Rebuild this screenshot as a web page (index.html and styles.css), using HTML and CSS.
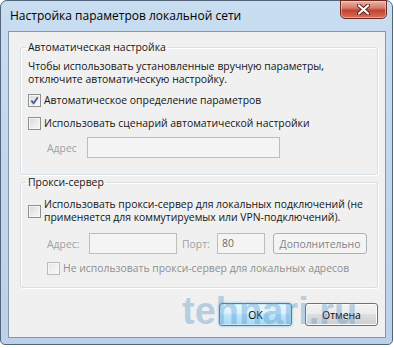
FILE: index.html
```html
<!DOCTYPE html>
<html lang="ru">
<head>
    <meta charset="UTF-8">
    <meta name="viewport" content="width=device-width, initial-scale=1.0">
    <title>Настройка параметров локальной сети</title>
    <link rel="stylesheet" href="styles.css">
</head>
<body>
    <div class="window">
        <div class="titlebar">
            <span class="title">Настройка параметров локальной сети</span>
            <button class="close-btn" aria-label="Закрыть">
                <svg width="13" height="11" viewBox="0 0 13 11">
                    <path d="M2 1.5 L11 9.5 M11 1.5 L2 9.5" stroke="#5b1c14" stroke-width="4" stroke-linecap="round"/>
                    <path d="M2 1.5 L11 9.5 M11 1.5 L2 9.5" stroke="#fff" stroke-width="2.2" stroke-linecap="round"/>
                </svg>
            </button>
        </div>

        <div class="client">
            <fieldset class="group">
                <legend>Автоматическая настройка</legend>
                <p class="hint">Чтобы использовать установленные вручную параметры,<br>отключите автоматическую настройку.</p>
                <label class="check-row first">
                    <span class="check">
                        <svg width="9" height="9" viewBox="0 0 9 9">
                            <path d="M1.3 4.6 L3.6 7.2 L7.8 1.2" fill="none" stroke="#4a5c94" stroke-width="1.8"/>
                        </svg>
                    </span>
                    Автоматическое определение параметров
                </label>
                <label class="check-row second">
                    <span class="check"></span>
                    Использовать сценарий автоматической настройки
                </label>
                <div class="field-row">
                    <span class="field-label">Адрес</span>
                    <span class="textbox addr-auto"></span>
                </div>
            </fieldset>

            <fieldset class="group proxy">
                <legend>Прокси-сервер</legend>
                <label class="check-row multi">
                    <span class="check"></span>
                    <span class="multi-text">Использовать прокси-сервер для локальных подключений (не<br>применяется для коммутируемых или VPN-подключений).</span>
                </label>
                <div class="field-row proxy-row">
                    <span class="field-label proxy-label">Адрес:</span>
                    <span class="textbox addr-proxy"></span>
                    <span class="port-label">Порт:</span>
                    <span class="textbox port">80</span>
                    <button class="btn btn-advanced" disabled>Дополнительно</button>
                </div>
                <label class="check-row indented disabled">
                    <span class="check"></span>
                    Не использовать прокси-сервер для локальных адресов
                </label>
            </fieldset>

            <div class="actions">
                <button class="btn btn-default">OK</button>
                <button class="btn">Отмена</button>
            </div>
        </div>

        <div class="watermark">tehnari.ru</div>
    </div>
</body>
</html>
```

FILE: styles.css
```css
* {
    box-sizing: border-box;
}

body {
    margin: 0;
    background-color: #fff;
    font-family: "Open Sans", "Noto Sans", sans-serif;
    font-size: 10.4px;
    color: #151515;
}

.window {
    position: relative;
    width: 393px;
    height: 345px;
    display: flex;
    flex-direction: column;
    padding: 0 6px 6px 7px;
    border: 1px solid #52657a;
    border-radius: 7px 7px 5px 5px;
    background: linear-gradient(#c9ddf1, #bad1e9);
}

.titlebar {
    height: 30px;
    flex: none;
    display: flex;
    justify-content: space-between;
    align-items: flex-start;
}

.title {
    padding: 7px 0 0 2px;
    font-size: 12px;
    line-height: 16px;
    color: #000;
}

.close-btn {
    width: 47px;
    height: 19px;
    margin: -1px -1px 0 0;
    padding: 0;
    display: flex;
    align-items: center;
    justify-content: center;
    border: 1px solid #6e2a22;
    border-radius: 0 0 5px 5px;
    background: linear-gradient(#eab4a6, #d57f6c 40%, #c0422f 55%, #d9705a);
    box-shadow: inset 0 0 0 1px rgba(255, 220, 210, 0.5);
}

.client {
    flex: 1;
    display: flex;
    flex-direction: column;
    padding: 8px 7px 0 11px;
    border: 1px solid #8397ad;
    background-color: #f0f0f0;
}

.group {
    margin: 0;
    padding: 5px 7px 16px;
    border: 1px solid #d5dfe5;
    border-radius: 3px;
    box-shadow: inset 1px 1px 0 #fff, 1px 1px 0 #fff;
}

.group legend {
    margin-left: -2px;
    padding: 0 2px;
    line-height: 15px;
}

.hint {
    margin: 0;
    line-height: 13px;
    white-space: nowrap;
}

.check-row {
    display: flex;
    align-items: center;
    gap: 3px;
    line-height: 15px;
    white-space: nowrap;
}

.check-row.first {
    margin-top: 7px;
}

.check-row.second {
    margin-top: 8px;
}

.check {
    width: 13px;
    height: 13px;
    flex: none;
    display: flex;
    align-items: center;
    justify-content: center;
    border: 1px solid #8e8f8f;
    background: linear-gradient(135deg, #d8d8d8, #fbfbfb);
    box-shadow: inset 0 0 0 1px #f6f6f6;
}

.field-row {
    display: flex;
    align-items: center;
    height: 21px;
    margin-top: 6px;
}

.field-label {
    width: 40px;
    margin-left: 19px;
    color: #a0a0a0;
}

.textbox {
    height: 21px;
    border: 1px solid #bdbdbd;
    background-color: #f4f4f4;
}

.addr-auto {
    width: 193px;
}

.group.proxy {
    padding: 8px 7px 11px;
}

.check-row.multi {
    line-height: 13px;
}

.proxy-row {
    margin-top: 9px;
}

.proxy-label {
    width: 42px;
}

.addr-proxy {
    width: 88px;
}

.port-label {
    width: 35px;
    margin-left: 5px;
    color: #a0a0a0;
}

.port {
    width: 48px;
    padding-left: 4px;
    line-height: 19px;
    color: #6d6d6d;
}

.check-row.indented {
    margin: 7px 0 0 19px;
}

.check-row.disabled {
    color: #8f8f8f;
}

.check-row.disabled .check {
    border-color: #bcbcbc;
    background: linear-gradient(135deg, #e6e6e6, #fafafa);
}

.actions {
    display: flex;
    justify-content: flex-end;
    gap: 13px;
    margin-top: 15px;
}

.btn {
    width: 73px;
    height: 23px;
    padding: 0;
    font: inherit;
    color: #000;
    border: 1px solid #707070;
    border-radius: 3px;
    background: linear-gradient(#f2f2f2, #ebebeb 50%, #dddddd 50%, #cfcfcf);
    box-shadow: inset 0 0 0 1px #fcfcfc;
}

.btn-default {
    border-color: #3c7fb1;
    background: linear-gradient(#eaf6fd, #d9f0fc 50%, #bee6fd 50%, #a7d9f5);
    box-shadow: inset 0 0 0 1px #c8ebfb, 0 0 3px rgba(60, 160, 230, 0.6);
}

.btn-advanced {
    width: 94px;
    height: 21px;
    margin-left: 8px;
    color: #838383;
    border-color: #adb2b5;
    background: #f4f4f4;
    box-shadow: none;
}

.watermark {
    position: absolute;
    left: 181px;
    top: 291px;
    font-family: "Liberation Sans", sans-serif;
    font-size: 38px;
    font-weight: bold;
    line-height: 38px;
    color: rgba(90, 150, 200, 0.4);
    pointer-events: none;
}
```
